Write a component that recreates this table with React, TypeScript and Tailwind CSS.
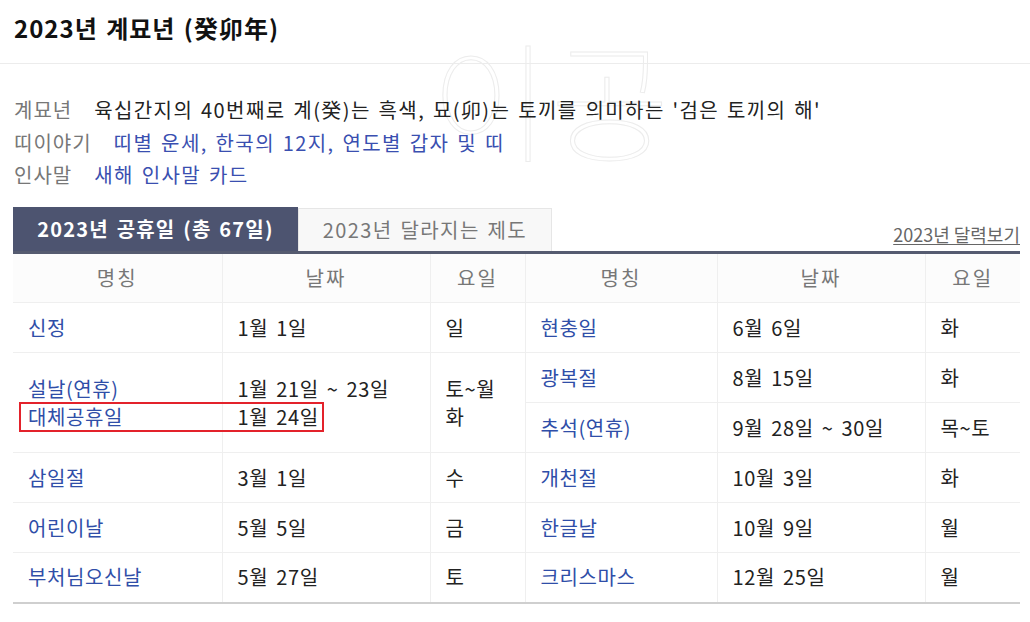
import React from "react";

const FONT = '"Noto Sans CJK KR", "Noto Sans", sans-serif';

type Cell = { name: string; date: string; day: string };

const left: (Cell | null)[] = [
  { name: "신정", date: "1월 1일", day: "일" },
  null,
  null,
  { name: "삼일절", date: "3월 1일", day: "수" },
  { name: "어린이날", date: "5월 5일", day: "금" },
  { name: "부처님오신날", date: "5월 27일", day: "토" },
];

const right: Cell[] = [
  { name: "현충일", date: "6월 6일", day: "화" },
  { name: "광복절", date: "8월 15일", day: "화" },
  { name: "추석(연휴)", date: "9월 28일 ~ 30일", day: "목~토" },
  { name: "개천절", date: "10월 3일", day: "화" },
  { name: "한글날", date: "10월 9일", day: "월" },
  { name: "크리스마스", date: "12월 25일", day: "월" },
];

const td = "border border-[#efefef] pl-[15px] pr-2 align-middle [word-spacing:3px]";

function RightCells({ c }: { c: Cell }) {
  return (
    <>
      <td className={`${td} text-[#2f4ea8]`}>{c.name}</td>
      <td className={`${td} text-[#222]`}>{c.date}</td>
      <td className={`${td} text-[#222] border-r-0`}>{c.day}</td>
    </>
  );
}

export default function App() {
  return (
    <div
      className="relative w-[1030px] h-[622px] bg-white overflow-hidden text-[20px] tracking-[0.6px]"
      style={{ fontFamily: FONT }}
    >
      {/* watermark */}
      <div className="absolute left-[430px] top-[30px] text-[130px] leading-none font-thin text-transparent [-webkit-text-stroke:1px_#ececec] pointer-events-none select-none">
        이공
      </div>

      <div className="relative h-[64px] border-b border-[#ececec] pl-[14px] pt-[13px]">
        <h1 className="text-[24px] font-bold leading-[30px] tracking-[1px] [word-spacing:2px] text-[#111]">
          2023년 계묘년 (癸卯年)
        </h1>
      </div>

      <div className="relative pl-[14px] pt-[30px] leading-[32.5px]">
        <div className="flex gap-[22px]">
          <span className="text-[#777] tracking-[1px]">계묘년</span>
          <span className="text-[#222] tracking-[1.4px] [word-spacing:2px]">
            육십간지의 40번째로 계(癸)는 흑색, 묘(卯)는 토끼를 의미하는 '검은 토끼의 해'
          </span>
        </div>
        <div className="flex gap-[22px]">
          <span className="text-[#777] tracking-[1px]">띠이야기</span>
          <span className="text-[#3a4fb0] tracking-[1.4px] [word-spacing:2px]">
            띠별 운세, 한국의 12지, 연도별 갑자 및 띠
          </span>
        </div>
        <div className="flex gap-[22px]">
          <span className="text-[#777] tracking-[1px]">인사말</span>
          <span className="text-[#3a4fb0] tracking-[1.4px] [word-spacing:2px]">새해 인사말 카드</span>
        </div>
      </div>

      <div className="relative mx-[13px] mt-[15px] w-[1007px]">
        <div className="flex items-end border-b-[3px] border-[#555b70]">
          <div className="w-[285px] h-[44px] bg-[#4d5470] text-white font-bold flex items-center justify-center tracking-[1.2px] [word-spacing:2px]">
            2023년 공휴일 (총 67일)
          </div>
          <div className="w-[254px] h-[43px] bg-[#f8f8f8] border border-b-0 border-[#e6e6e6] text-[#777] flex items-center justify-center tracking-[1.4px] [word-spacing:2px]">
            2023년 달라지는 제도
          </div>
          <div className="ml-auto pb-[3px] text-[18px] tracking-[0px] text-[#666] underline underline-offset-2">
            2023년 달력보기
          </div>
        </div>

        <table className="w-[1007px] table-fixed border-collapse border-b-2 border-[#cfcfcf]">
          <colgroup>
            <col className="w-[209px]" />
            <col className="w-[208px]" />
            <col className="w-[95px]" />
            <col className="w-[192px]" />
            <col className="w-[208px]" />
            <col className="w-[95px]" />
          </colgroup>
          <thead>
            <tr className="h-[49px] bg-[#fcfcfc] text-[#777]">
              {["명칭", "날짜", "요일", "명칭", "날짜", "요일"].map((h, i) => (
                <th
                  key={i}
                  className={`border border-t-0 border-[#efefef] font-normal tracking-[2px] ${i === 0 ? "border-l-0" : ""} ${i === 5 ? "border-r-0" : ""}`}
                >
                  {h}
                </th>
              ))}
            </tr>
          </thead>
          <tbody>
            {right.map((r, i) => (
              <tr key={i} className="h-[50px]">
                {i === 1 ? (
                  <>
                    <td rowSpan={2} className={`${td} border-l-0 text-[#2f4ea8] leading-[28px]`}>
                      설날(연휴)
                      <br />
                      대체공휴일
                    </td>
                    <td rowSpan={2} className={`${td} text-[#222] leading-[28px]`}>
                      1월 21일 ~ 23일
                      <br />
                      1월 24일
                    </td>
                    <td rowSpan={2} className={`${td} text-[#222] leading-[28px]`}>
                      토~월
                      <br />
                      화
                    </td>
                  </>
                ) : left[i] ? (
                  <>
                    <td className={`${td} border-l-0 text-[#2f4ea8]`}>{left[i]!.name}</td>
                    <td className={`${td} text-[#222]`}>{left[i]!.date}</td>
                    <td className={`${td} text-[#222]`}>{left[i]!.day}</td>
                  </>
                ) : null}
                <RightCells c={r} />
              </tr>
            ))}
          </tbody>
        </table>

        {/* highlight box */}
        <div className="absolute left-[6px] top-[195px] w-[305px] h-[30px] border-2 border-[#e3222b] pointer-events-none" />
      </div>
    </div>
  );
}
